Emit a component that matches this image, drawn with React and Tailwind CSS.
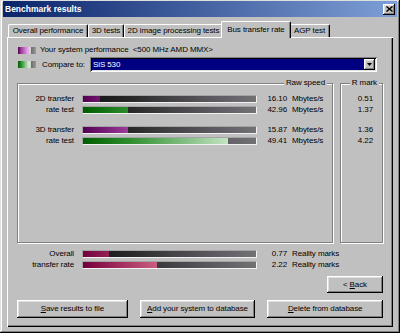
import React from 'react'

const RAISED = 'shadow-[inset_-1px_-1px_#000,inset_1px_1px_#fff,inset_-2px_-2px_#808080,inset_2px_2px_#dfdfdf]'
const SUNKEN = 'shadow-[inset_1px_1px_#808080,inset_-1px_-1px_#fff,inset_2px_2px_#000,inset_-2px_-2px_#dfdfdf]'
const ETCHED = 'border border-[#808080] shadow-[inset_1px_1px_#fff,1px_1px_#fff]'
const EMPTY = 'bg-[linear-gradient(to_right,#101010,#262626_25%,#48464a_55%,#66626a_85%,#727272)]'

const FILLS = {
  purple: 'bg-[linear-gradient(to_right,#520052,#9c3c9c_26%,#d890d8_70%,#f0c8f0)]',
  green: 'bg-[linear-gradient(to_right,#005c00,#2c8c2c_26%,#78b878_55%,#c4e4c4_84%,#d8f0d8)]',
  crimson: 'bg-[linear-gradient(to_right,#72003c,#a02a5c_20%,#c8607e_43%,#e8a8b8_75%,#f4d0d8)]',
}

const TABS = [
  { label: 'Overall performance', w: 'w-[80px]' },
  { label: '3D tests', w: 'w-[36px]' },
  { label: '2D image processing tests', w: 'w-[99px]' },
  { label: 'Bus transfer rate', w: 'w-[70px]', active: true },
  { label: 'AGP test', w: 'w-[41px]' },
]

const TESTS = [
  { label: ['2D transfer', 'rate test'], mine: 10, other: 26, raw: ['16.10', '42.96'], mark: ['0.51', '1.37'] },
  { label: ['3D transfer', 'rate test'], mine: 26, other: 84, raw: ['15.87', '49.41'], mark: ['1.36', '4.22'] },
]

function Bar({ pct, fill }) {
  return (
    <div className={`w-[175px] h-[8px] border border-t-[#a4a4a4] border-l-[#a4a4a4] border-b-[#f2f2f2] border-r-[#f2f2f2] ${EMPTY}`}>
      <div className="h-full overflow-hidden" style={{ width: `${pct}%` }}>
        <div className={`h-full w-[173px] ${fill}`} />
      </div>
    </div>
  )
}

function Row({ label, pct, fill, value, unit, labelW = 'w-[56px]' }) {
  return (
    <div className="flex items-center h-[10px]">
      <span className={`${labelW} text-right`}>{label}</span>
      <div className="ml-[8px]">
        <Bar pct={pct} fill={fill} />
      </div>
      <span className="w-[30px] text-right">{value}</span>
      <span className="ml-[5px]">{unit}</span>
    </div>
  )
}

function Swatch({ fill }) {
  return (
    <div className="flex w-[18px] h-[7px]">
      <div className={`w-[12px] h-full ${fill}`} />
      <div className="w-[1px] h-full bg-[#d0d0d0]" />
      <div className="w-[5px] h-full bg-[linear-gradient(to_right,#6c6c6c,#9a9a9a)]" />
    </div>
  )
}

function Button({ w, h = 'h-[18px]', children }) {
  return (
    <div className={`${w} ${h} ${RAISED} bg-[#c0c0c0] flex items-center justify-center`}>
      {children}
    </div>
  )
}

export default function App() {
  return (
    <div
      className={`w-[400px] h-[333px] bg-[#c0c0c0] px-[3px] pt-[1px] text-[8px] leading-[10px] tracking-[-0.1px] text-black font-['Liberation_Sans',Arial,sans-serif] shadow-[inset_-1px_-1px_#000,inset_1px_1px_#dfdfdf,inset_-2px_-2px_#808080,inset_2px_2px_#fff] overflow-hidden`}
    >
      {/* Title bar */}
      <div className="h-[16px] flex items-center justify-between bg-[linear-gradient(to_right,#0a246a,#7d9fd6)]">
        <span className="pl-[2px] text-white font-bold text-[8.5px] tracking-normal">Benchmark results</span>
        <div className={`mr-[2px] w-[12px] h-[11px] bg-[#c0c0c0] ${RAISED} flex items-center justify-center`}>
          <svg width="7" height="6" viewBox="0 0 7 6">
            <path d="M0.5 0.5 L6.5 5.5 M6.5 0.5 L0.5 5.5" stroke="#000" strokeWidth="1.4" />
          </svg>
        </div>
      </div>

      {/* Tabs */}
      <div className="mt-[4px] ml-[5px] h-[16px] flex items-end">
        {TABS.map((t) =>
          t.active ? (
            <div
              key={t.label}
              className={`relative z-10 -mx-[2px] -mb-[1px] h-[17px] ${t.w} bg-[#c0c0c0] border-t border-l border-white border-r border-r-[#000] rounded-t-[2px] shadow-[inset_-1px_0_#808080] flex items-start justify-center pt-[3px]`}
            >
              {t.label}
            </div>
          ) : (
            <div
              key={t.label}
              className={`h-[13px] ${t.w} bg-[#c0c0c0] border-t border-l border-white border-r border-r-[#000] rounded-t-[2px] shadow-[inset_-1px_0_#808080] flex items-center justify-center`}
            >
              {t.label}
            </div>
          )
        )}
      </div>

      {/* Tab panel */}
      <div className="ml-[4px] w-[386px] h-[290px] px-[10px] pt-[7px] shadow-[inset_1px_1px_#fff,inset_-1px_-1px_#000,inset_-2px_-2px_#808080] flex flex-col">
        <div className="h-[12px] flex items-center pl-[1px]">
          <Swatch fill={FILLS.purple} />
          <span className="ml-[4px]">Your system performance&nbsp;&nbsp;&lt;500 MHz AMD MMX&gt;</span>
        </div>

        <div className="mt-[1px] h-[15px] flex items-center pl-[1px]">
          <Swatch fill={FILLS.green} />
          <span className="ml-[6px] w-[48px]">Compare to:</span>
          <div className={`w-[287px] h-[15px] p-[2px] bg-white ${SUNKEN} flex`}>
            <div className="flex-1 bg-[#000080] text-white flex items-center pl-[1px]">SiS 530</div>
            <div className={`w-[11px] bg-[#c0c0c0] ${RAISED} flex items-center justify-center`}>
              <svg width="5" height="3" viewBox="0 0 5 3">
                <path d="M0 0 H5 L2.5 3 Z" fill="#000" />
              </svg>
            </div>
          </div>
        </div>

        {/* Groups */}
        <div className="mt-[11px] flex gap-[7px]">
          <div className={`relative w-[316px] h-[160px] ${ETCHED} pt-[10px]`}>
            <span className="absolute -top-[6px] right-[5px] bg-[#c0c0c0] px-[2px]">Raw speed</span>
            {TESTS.map((t, i) => (
              <div key={i} className={i ? 'mt-[10px] flex flex-col gap-[1px]' : 'flex flex-col gap-[1px]'}>
                <Row label={t.label[0]} pct={t.mine} fill={FILLS.purple} value={t.raw[0]} unit="Mbytes/s" />
                <Row label={t.label[1]} pct={t.other} fill={FILLS.green} value={t.raw[1]} unit="Mbytes/s" />
              </div>
            ))}
          </div>
          <div className={`relative w-[43px] h-[160px] ${ETCHED} pt-[10px] pr-[9px]`}>
            <span className="absolute -top-[6px] right-[3px] bg-[#c0c0c0] px-[2px]">R mark</span>
            {TESTS.map((t, i) => (
              <div key={i} className={i ? 'mt-[10px] flex flex-col gap-[1px]' : 'flex flex-col gap-[1px]'}>
                <div className="h-[10px] text-right">{t.mark[0]}</div>
                <div className="h-[10px] text-right">{t.mark[1]}</div>
              </div>
            ))}
          </div>
        </div>

        {/* Overall */}
        <div className="mt-[6px] flex flex-col gap-[1px]">
          <Row labelW="w-[57px]" label="Overall" pct={15} fill={FILLS.crimson} value="0.77" unit="Reality marks" />
          <Row labelW="w-[57px]" label="transfer rate" pct={43} fill={FILLS.crimson} value="2.22" unit="Reality marks" />
        </div>

        <div className="mt-[6px] flex justify-end">
          <Button w="w-[56px]" h="h-[17px]">
            &lt; <span className="underline ml-[2px]">B</span>ack
          </Button>
        </div>

        <div className="mt-[7px] flex gap-[12px]">
          <Button w="w-[111px]">
            <span className="underline">S</span>ave results to file
          </Button>
          <Button w="w-[116px]">
            <span className="underline">A</span>dd your system to database
          </Button>
          <Button w="w-[116px]">
            <span className="underline">D</span>elete from database
          </Button>
        </div>
      </div>
    </div>
  )
}
